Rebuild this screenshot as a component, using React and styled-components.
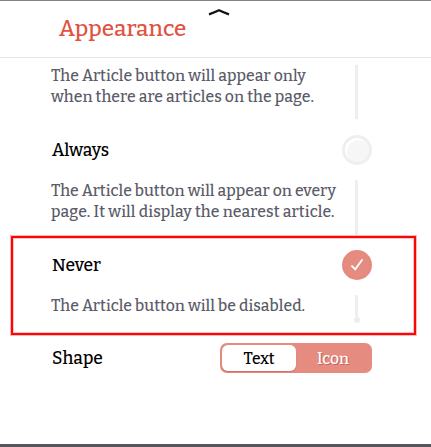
import React from "react";
import styled, { createGlobalStyle } from "styled-components";

const GlobalStyle = createGlobalStyle`
  * { box-sizing: border-box; }
  body { margin: 0; background: #fff; }
`;

const Page = styled.div`
  position: relative;
  display: flex;
  flex-direction: column;
  width: 431px;
  height: 447px;
  overflow: hidden;
  background: #fff;
  border-top: 1px solid #838383;
  border-bottom: 3px solid #55565b;
  font-family: Bitter, "DejaVu Serif Condensed", "DejaVu Serif", serif;
  color: #000;
`;

const Header = styled.header`
  position: relative;
  height: 57px;
  padding: 11px 0 0 59px;
  border-bottom: 1px solid #e5e5e5;
`;

const Title = styled.h1`
  margin: 0;
  font-size: 22.5px;
  line-height: 34px;
  font-weight: 500;
  letter-spacing: 0.05px;
  color: #e0533f;
`;

const Caret = styled.svg`
  position: absolute;
  left: 207px;
  top: 7px;
`;

const Content = styled.main`
  display: flex;
  flex-direction: column;
  gap: 15px;
  width: 372px;
  padding: 7px 0 0 51px;
`;

const Option = styled.section`
  display: flex;
  flex-direction: column;
  gap: 15px;
`;

const Row = styled.div`
  display: flex;
  justify-content: space-between;
  height: 30px;
`;

const Label = styled.span`
  padding-left: 1px;
  font-size: 17.4px;
  font-weight: 500;
  line-height: 32px;
  white-space: nowrap;
`;

const Detail = styled.div`
  display: flex;
  justify-content: space-between;
  height: ${(p) => p.$height}px;
  padding-right: 12px;
`;

const Description = styled.p`
  margin: 0;
  font-size: 15.8px;
  font-weight: 550;
  line-height: 21px;
  color: #5b5c69;
`;

const Line = styled.span`
  display: block;
  white-space: nowrap;
  letter-spacing: ${(p) => p.$tracking}px;
`;

const Track = styled.div`
  display: flex;
  flex-direction: column;
  align-items: center;
  width: 6px;
  height: ${(p) => p.$length}px;
  &::before {
    content: "";
    flex: 1;
    width: 3px;
    margin-right: 1px;
    background: #eee;
  }
`;

const TrackEnd = styled.div`
  width: 6px;
  height: 6px;
  border-radius: 50%;
  background: #ecedef;
`;

const Radio = styled.div`
  display: flex;
  align-items: center;
  justify-content: center;
  width: 30px;
  height: 30px;
  border-radius: 50%;
  border: 3px solid ${(p) => (p.$on ? "#e68a80" : "#eeeff0")};
  background: ${(p) => (p.$on ? "#e58b80" : "#f6f6f6")};
  box-shadow: ${(p) => (p.$on ? "none" : "inset 2px 2px 1px #fff")};
`;

const Toggle = styled.div`
  display: flex;
  width: 152px;
  height: 30px;
  padding: 2px;
  border-radius: 7px;
  background: #e58b80;
`;

const Segment = styled.div`
  width: 74px;
  border-radius: 6px;
  text-align: center;
  font-size: 15.6px;
  font-weight: 550;
  line-height: 27px;
  color: ${(p) => (p.$on ? "#000" : "#fff")};
  background: ${(p) => (p.$on ? "#fff" : "transparent")};
  box-shadow: ${(p) => (p.$on ? "0 1px 1px #cf7167" : "none")};
  text-shadow: ${(p) => (p.$on ? "none" : "1px 1px 0 #bd6a61")};
`;

const Highlight = styled.div`
  position: absolute;
  left: 10px;
  top: 234px;
  width: 407px;
  height: 101px;
  border: 1px solid #ffb8b8;
  box-shadow: inset 0 0 0 2px #f90606, inset 0 0 0 3px #ffc4c4;
  pointer-events: none;
`;

const options = [
  {
    height: 55,
    track: 54,
    lines: [
      { text: "The Article button will appear only", tracking: 0.03 },
      { text: "when there are articles on the page.", tracking: 0.05 },
    ],
  },
  {
    label: "Always",
    height: 55,
    track: 55,
    lines: [
      { text: "The Article button will appear on every", tracking: 0 },
      { text: "page. It will display the nearest article.", tracking: 0.09 },
    ],
  },
  {
    label: "Never",
    on: true,
    height: 33,
    track: 28,
    last: true,
    lines: [{ text: "The Article button will be disabled.", tracking: 0.02 }],
  },
];

function Check() {
  return (
    <svg width="14" height="14" viewBox="0 0 14 14" fill="none">
      <path d="M2 8.1 L5.2 11.2 L12 2" stroke="#fff" strokeWidth="1.9" strokeLinecap="round" />
    </svg>
  );
}

export default function App() {
  return (
    <>
      <GlobalStyle />
      <Page>
        <Header>
          <Title>Appearance</Title>
          <Caret width="24" height="9" viewBox="0 0 24 9" fill="none">
            <path d="M2 6.3 Q7 4.7 12 2.3 Q17 4.7 22 6.3" stroke="#111" strokeWidth="2.3" strokeLinejoin="round" />
          </Caret>
        </Header>
        <Content>
          {options.map((o, i) => (
            <Option key={i}>
              {o.label && (
                <Row>
                  <Label>{o.label}</Label>
                  <Radio $on={o.on}>{o.on && <Check />}</Radio>
                </Row>
              )}
              <Detail $height={o.height}>
                <Description>
                  {o.lines.map((line) => (
                    <Line key={line.text} $tracking={line.tracking}>
                      {line.text}
                    </Line>
                  ))}
                </Description>
                <Track $length={o.track}>{o.last && <TrackEnd />}</Track>
              </Detail>
            </Option>
          ))}
          <Row>
            <Label>Shape</Label>
            <Toggle>
              <Segment $on>Text</Segment>
              <Segment>Icon</Segment>
            </Toggle>
          </Row>
        </Content>
        <Highlight />
      </Page>
    </>
  );
}
